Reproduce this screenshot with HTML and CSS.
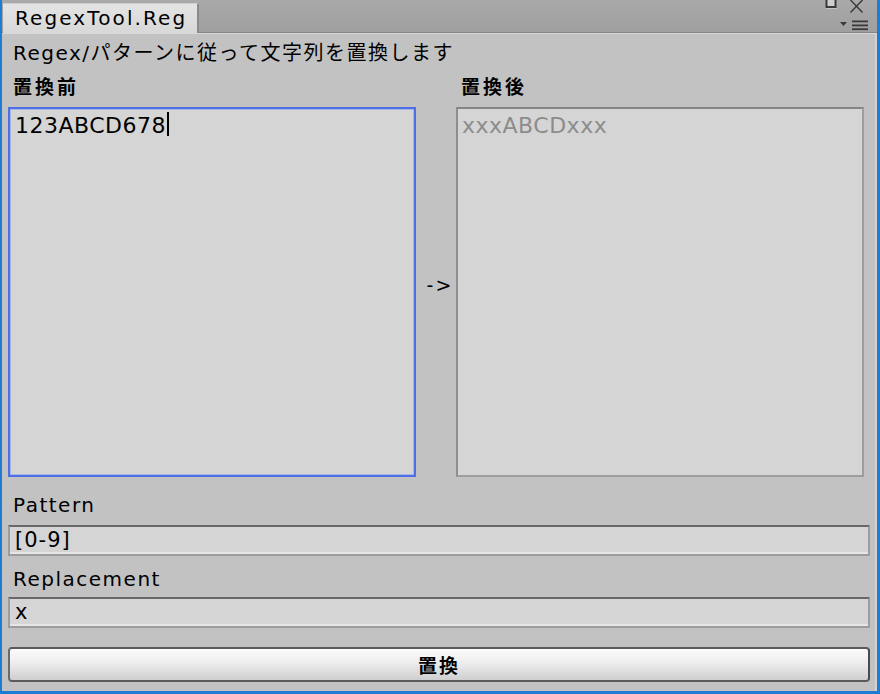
FILE: index.html
```html
<!DOCTYPE html>
<html lang="ja">
<head>
<meta charset="utf-8">
<title>RegexTool.Reg</title>
<link rel="stylesheet" href="styles.css">
</head>
<body>
<div class="window">
  <div class="tabbar">
    <div class="tab">RegexTool.Reg</div>
    <svg class="controls" width="57" height="32" viewBox="0 0 57 32">
      <rect x="6.5" y="-2" width="9" height="9" fill="#cfcfcf" stroke="#3a3a3a" stroke-width="2"/>
      <line x1="6" y1="8.5" x2="17" y2="8.5" stroke="#c4c4c4" stroke-width="1"/>
      <path d="M30.5 0 L42.5 12.5 M42.5 0 L30.5 12.5" stroke="#3c3c3c" stroke-width="1.5" fill="none"/>
      <path d="M20 22 L27 22 L23.5 26 Z" fill="#3a3a3a"/>
      <rect x="32" y="20.5" width="16" height="1.8" fill="#3a3a3a"/>
      <rect x="32" y="24.5" width="16" height="1.8" fill="#3a3a3a"/>
      <rect x="32" y="28.3" width="16" height="1.8" fill="#3a3a3a"/>
    </svg>
  </div>
  <div class="content">
    <div class="desc">Regex/パターンに従って文字列を置換します</div>
    <div class="columns">
      <div class="col">
        <div class="label bold">置換前</div>
        <div class="box focus"><span class="mono-text">123ABCD678</span><span class="caret"></span></div>
      </div>
      <div class="arrow">-&gt;</div>
      <div class="col">
        <div class="label bold">置換後</div>
        <div class="box readonly"><span class="mono-text dim">xxxABCDxxx</span></div>
      </div>
    </div>
    <div class="label field-label">Pattern</div>
    <div class="field">[0-9]</div>
    <div class="label field-label second">Replacement</div>
    <div class="field second-field">x</div>
    <button class="btn">置換</button>
  </div>
</div>
</body>
</html>
```
FILE: styles.css
```css
html, body {
  margin: 0;
  padding: 0;
  background: #c2c2c2;
}
body {
  font-family: "DejaVu Sans", "Noto Sans CJK JP", sans-serif;
  color: #000;
}
.window {
  width: 880px;
  height: 694px;
  box-sizing: border-box;
  border-left: 2px solid #1e7cd6;
  border-right: 3px solid #1e7cd6;
  border-bottom: 3px solid #1e7cd6;
  display: flex;
  flex-direction: column;
  background: #c2c2c2;
}
.tabbar {
  height: 32px;
  background: linear-gradient(#a9a9a9, #9f9f9f);
  border-bottom: 1px solid #858585;
  display: flex;
  align-items: flex-end;
  padding-left: 1px;
  flex: none;
}
.tab {
  height: 30px;
  margin-bottom: -1px;
  padding-left: 12px;
  box-sizing: border-box;
  width: 196px;
  background: linear-gradient(#e4e4e4, #d8d8d8);
  border-top: 1px solid #cfcfcf;
  border-right: 2px solid #8a8a8a;
  font-size: 20px;
  letter-spacing: 2.1px;
  line-height: 28px;
  white-space: nowrap;
  position: relative;
  z-index: 1;
}
.controls {
  margin-left: auto;
  align-self: stretch;
}
.content {
  flex: 1;
  display: flex;
  flex-direction: column;
  border-top: 1px solid #d9d9d9;
  border-right: 2px solid #d2d2d2;
  padding-left: 6px;
  padding-right: 5px;
  background: #c2c2c2;
}
.desc {
  font-size: 20px;
  letter-spacing: 1.5px;
  line-height: 24px;
  padding-top: 7px;
  padding-left: 5px;
  white-space: nowrap;
}
.columns {
  display: flex;
  margin-right: 6px;
}
.col {
  flex: 1;
  display: flex;
  flex-direction: column;
}
.label {
  font-size: 20px;
  letter-spacing: 1.5px;
  line-height: 24px;
  padding-left: 5px;
}
.bold {
  font-weight: bold;
  margin-top: 10px;
  font-size: 19px;
  letter-spacing: 3px;
}
.box {
  margin-top: 8px;
  height: 370px;
  box-sizing: border-box;
  background: #d5d5d5;
  padding: 4px 5px;
  font-size: 22px;
  letter-spacing: 0.5px;
  line-height: 26px;
  display: flex;
  align-items: flex-start;
}
.box.focus {
  border: 2px solid #4d6fe6;
  box-shadow: inset 0 0 0 1px #a8b4e6;
}
.box.readonly {
  border: 2px solid #9e9e9e;
  border-top-color: #858585;
  border-left-color: #8e8e8e;
  padding-left: 4px;
}
.dim {
  color: #8c8c8c;
}
.caret {
  width: 2px;
  height: 24px;
  background: #000;
  margin-left: 1px;
  margin-top: -1px;
}
.arrow {
  width: 40px;
  flex: none;
  display: flex;
  align-items: center;
  justify-content: center;
  padding-top: 28px;
  padding-left: 8px;
  box-sizing: border-box;
  font-size: 19px;
  letter-spacing: 2px;
}
.field-label {
  margin-top: 16px;
}
.field-label.second {
  margin-top: 11px;
}
.field {
  margin-top: 8px;
  height: 31px;
  box-sizing: border-box;
  background: #d5d5d5;
  border-top: 2px solid #686868;
  border-left: 2px solid #9d9d9d;
  border-right: 2px solid #9d9d9d;
  border-bottom: 2px solid #9d9d9d;
  box-shadow: inset 0 -2px 0 #e6e6e6;
  font-size: 21px;
  line-height: 26px;
  padding-left: 5px;
  letter-spacing: 1px;
}
.second-field {
  margin-top: 6px;
}
.btn {
  margin-top: 19px;
  height: 35px;
  width: 100%;
  box-sizing: border-box;
  border: 2px solid #5a5a5a;
  border-left-color: #6a6a6a;
  border-right-color: #4a4a4a;
  border-radius: 4px;
  background: linear-gradient(#fbfbfb 0%, #efefef 40%, #cfcfcf 100%);
  font-family: "DejaVu Sans", "Noto Sans CJK JP", sans-serif;
  font-size: 19px;
  font-weight: bold;
  letter-spacing: 2px;
  color: #000;
  padding: 0;
}
```
